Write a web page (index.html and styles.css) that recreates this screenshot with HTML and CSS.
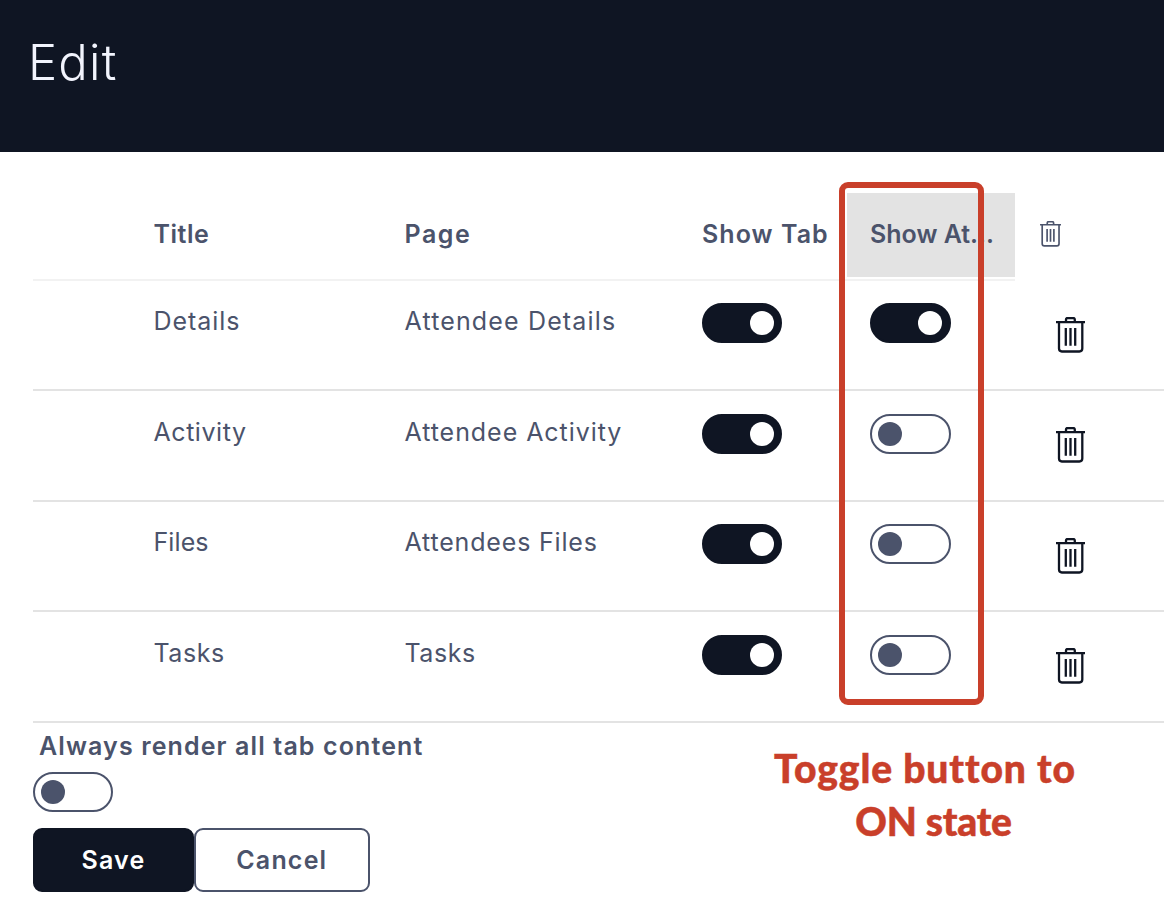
FILE: index.html
```html
<!DOCTYPE html>
<html lang="en">
<head>
<meta charset="utf-8">
<title>Edit</title>
<link rel="stylesheet" href="styles.css">
</head>
<body>
<svg class="defs" width="0" height="0" aria-hidden="true">
  <symbol id="trash" viewBox="0 0 29 36">
    <path d="M0 5.2H29M10 5V2.6Q10 1 11.6 1H17.2Q18.8 1 18.8 2.6V5M3 5.5V31.6Q3 34.5 5.9 34.5H23.4Q26.3 34.5 26.3 31.6V5.5M9.8 11V28.8M14.5 11V28.8M19.2 11V28.8" fill="none" stroke="currentColor" stroke-width="2.3"/>
  </symbol>
</svg>
<header class="banner"><h1 class="banner-title">Edit</h1></header>
<main class="content">
  <section class="table">
    <div class="head">
      <div class="head-cells">
        <span class="col-title">Title</span>
        <span class="col-page">Page</span>
        <span class="col-tab">Show Tab</span>
        <span class="col-at">Show At...</span>
      </div>
      <svg class="trash-small"><use href="#trash"/></svg>
    </div>
    <div class="row">
      <span class="col-title">Details</span><span class="col-page wide">Attendee Details</span>
      <span class="toggle on"></span><span class="toggle on"></span>
      <svg class="trash"><use href="#trash"/></svg>
    </div>
    <div class="row">
      <span class="col-title snug">Activity</span><span class="col-page">Attendee Activity</span>
      <span class="toggle on"></span><span class="toggle"></span>
      <svg class="trash"><use href="#trash"/></svg>
    </div>
    <div class="row">
      <span class="col-title tight">Files</span><span class="col-page mid">Attendees Files</span>
      <span class="toggle on"></span><span class="toggle"></span>
      <svg class="trash"><use href="#trash"/></svg>
    </div>
    <div class="row">
      <span class="col-title snug">Tasks</span><span class="col-page snug">Tasks</span>
      <span class="toggle on"></span><span class="toggle"></span>
      <svg class="trash"><use href="#trash"/></svg>
    </div>
  </section>
  <div class="render-label">Always render all tab content</div>
  <span class="toggle"></span>
  <div class="actions">
    <button class="btn save">Save</button><button class="btn cancel">Cancel</button>
  </div>
</main>
<div class="highlight"></div>
<div class="callout"><span class="line-one">Toggle button to</span><br><span class="line-two">ON state</span></div>
</body>
</html>
```

FILE: styles.css
```css
* { box-sizing: border-box; }
body {
  margin: 0;
  height: 920px;
  position: relative;
  overflow: hidden;
  background: #fff;
  color: #4b536b;
  font-family: Inter, "Liberation Sans", sans-serif;
  font-size: 25px;
  line-height: 36px;
}
.defs { position: absolute; }
.banner { height: 152px; padding: 33px 0 0 28px; background: #0f1523; }
.banner-title {
  margin: 0;
  color: #f2f4fd;
  font-size: 49px;
  line-height: 60px;
  font-weight: 350;
  letter-spacing: 1.2px;
}
.content { padding: 41px 0 0 33px; }
.head { display: flex; height: 87.75px; font-weight: 600; }
.head-cells {
  display: grid;
  grid-template-columns: 251px 297.5px 145px 168px;
  width: 982px;
  padding-left: 120.5px;
  border-bottom: 2px solid #f2f2f2;
  line-height: 83px;
}
.head .col-title { letter-spacing: .5px; }
.head .col-page { letter-spacing: 1.5px; }
.head .col-tab { letter-spacing: 1.05px; }
.col-at { height: 84px; padding-left: 23px; background: #e3e3e3; white-space: nowrap; }
.trash-small { width: 21px; height: 26px; margin: 28px 0 0 25px; }
.row {
  display: grid;
  grid-template-columns: 251px 297.5px 168.4px 185.6px 29px;
  align-items: start;
  height: 110.5px;
  padding: 22.3px 0 0 120.5px;
  border-bottom: 2px solid #e3e3e3;
}
.row .col-title, .row .col-page { letter-spacing: .95px; }
.row .col-page.wide { letter-spacing: 1.15px; }
.row .col-page.mid { letter-spacing: .82px; }
.row .col-title.tight { letter-spacing: .1px; }
.row .col-page.snug, .row .col-title.snug { letter-spacing: .55px; }
.trash { width: 29px; height: 36px; margin-top: 13.8px; color: #0f1523; }
.toggle {
  display: block;
  width: 80.4px;
  height: 40px;
  padding: 6px;
  border: 2px solid #4b536b;
  border-radius: 20px;
}
.toggle::before {
  content: "";
  display: block;
  width: 24px;
  height: 24px;
  border-radius: 50%;
  background: #4b536b;
}
.toggle.on { background: #0f1523; border-color: #0f1523; }
.toggle.on::before { margin-left: 40px; background: #fff; }
.render-label { height: 49px; padding: 5px 0 0 6px; font-weight: 600; letter-spacing: 1.12px; }
.actions { display: flex; margin-top: 16px; }
.btn {
  height: 64px;
  padding: 0;
  border: 2px solid #4b536b;
  border-radius: 9px;
  background: #fff;
  color: #4b536b;
  font: 600 25px Inter, "Liberation Sans", sans-serif;
  letter-spacing: 1.2px;
}
.save { width: 161px; background: #0f1523; border-color: #0f1523; color: #fff; }
.cancel { width: 175.6px; }
.highlight {
  position: absolute;
  left: 839px;
  top: 182px;
  width: 145px;
  height: 523px;
  border: 6px solid #c93f2a;
  border-radius: 9px;
}
.callout {
  position: absolute;
  left: 725px;
  top: 742px;
  width: 400px;
  text-align: center;
  color: #c93f2a;
  font: 900 39px/53px Lato, sans-serif;
  font-variant-ligatures: none;
  -webkit-text-stroke: .5px #c93f2a;
}
.line-one { letter-spacing: .9px; }
.line-two { margin-left: 17px; letter-spacing: -.2px; }
```
